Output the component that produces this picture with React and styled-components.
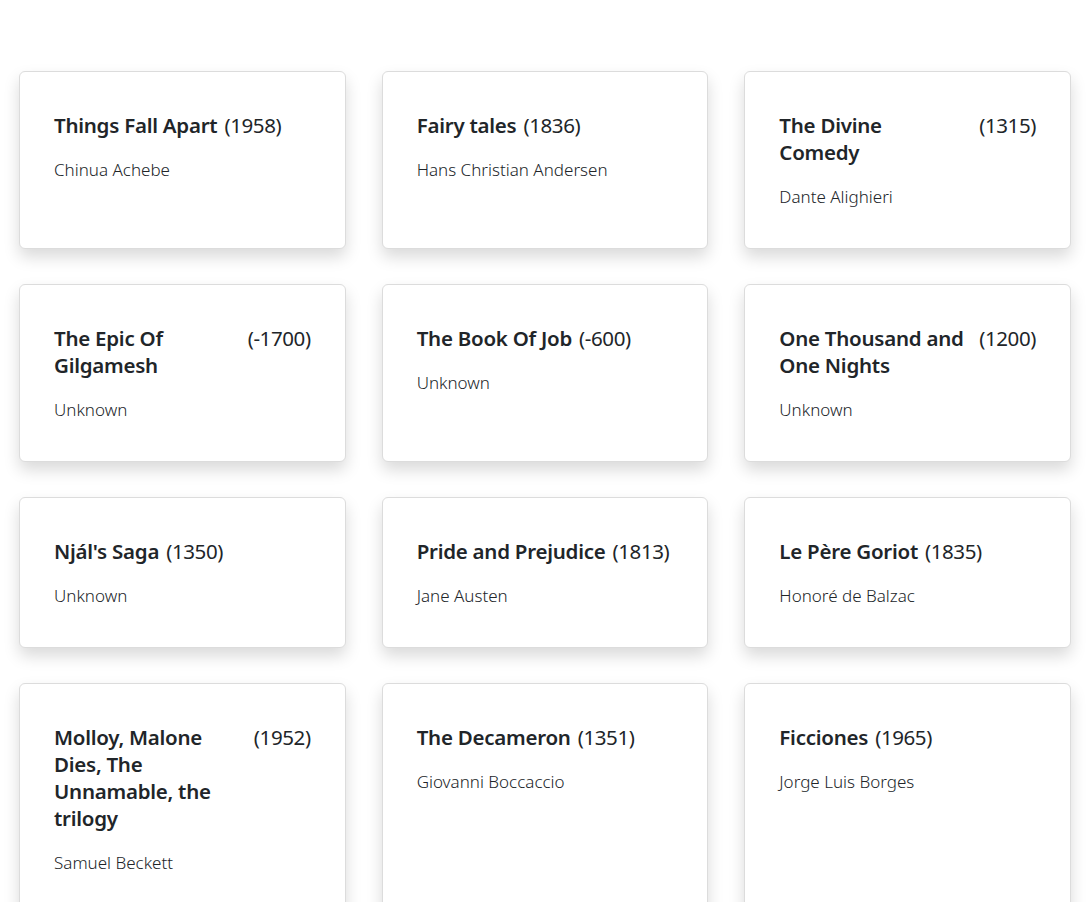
import React from 'react';
import styled, { createGlobalStyle } from 'styled-components';

const GlobalStyle = createGlobalStyle`
	body {
		margin: 0;
		background: #fff;
		font-family: "Noto Sans", "Open Sans", sans-serif;
		color: #212529;
	}
`;

const Page = styled.div`
	padding: 71px 21px 40px 19px;
`;

const Grid = styled.div`
	display: grid;
	grid-template-columns: repeat(3, 1fr);
	column-gap: 36px;
	row-gap: 35px;
`;

const Card = styled.div`
	background: #fff;
	border: 1px solid #dcdcdc;
	border-radius: 6px;
	box-shadow: 0 8px 16px rgba(0, 0, 0, 0.15);
	padding: 40px 34px 38px;
`;

const Heading = styled.div`
	display: flex;
	justify-content: ${p => (p.$spread ? 'space-between' : 'flex-start')};
	gap: 7px;
	font-size: 20.5px;
	line-height: 27px;
	margin-bottom: 17px;
`;

const Title = styled.span`
	font-weight: 600;
	letter-spacing: -0.25px;
	flex: 0 1 auto;
	max-width: ${p => (p.$narrow ? '180px' : 'none')};
`;

const Year = styled.span`
	font-weight: 400;
	letter-spacing: -0.4px;
	flex: none;
`;

const Author = styled.div`
	font-size: 17px;
	font-weight: 300;
	line-height: 27px;
	color: #212529;
`;

const books = [
	{ title: 'Things Fall Apart', year: 1958, author: 'Chinua Achebe' },
	{ title: 'Fairy tales', year: 1836, author: 'Hans Christian Andersen' },
	{ title: 'The Divine Comedy', year: 1315, author: 'Dante Alighieri', narrow: true },
	{ title: 'The Epic Of Gilgamesh', year: -1700, author: 'Unknown' },
	{ title: 'The Book Of Job', year: -600, author: 'Unknown' },
	{ title: 'One Thousand and One Nights', year: 1200, author: 'Unknown' },
	{ title: "Njál's Saga", year: 1350, author: 'Unknown' },
	{ title: 'Pride and Prejudice', year: 1813, author: 'Jane Austen' },
	{ title: 'Le Père Goriot', year: 1835, author: 'Honoré de Balzac' },
	{ title: 'Molloy, Malone Dies, The Unnamable, the trilogy', year: 1952, author: 'Samuel Beckett' },
	{ title: 'The Decameron', year: 1351, author: 'Giovanni Boccaccio' },
	{ title: 'Ficciones', year: 1965, author: 'Jorge Luis Borges' },
];

const App = () => {
	return (
		<>
			<GlobalStyle />
			<Page>
				<Grid>
					{books.map(b => (
						<Card key={b.title}>
							<Heading $spread={b.narrow}>
								<Title $narrow={b.narrow}>{b.title}</Title>
								<Year>({b.year})</Year>
							</Heading>
							<Author>{b.author}</Author>
						</Card>
					))}
				</Grid>
			</Page>
		</>
	);
};

export default App;
